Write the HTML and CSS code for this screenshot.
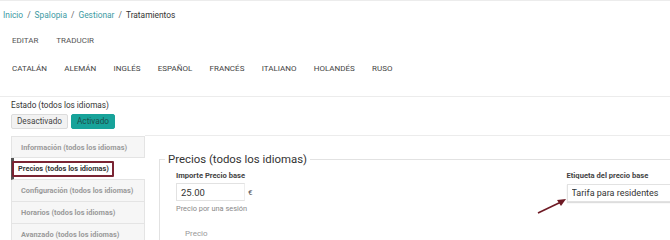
FILE: index.html
```html
<!DOCTYPE html>
<html lang="es">
<head>
    <meta charset="UTF-8">
    <title>Tratamientos</title>
    <link rel="stylesheet" href="styles.css">
</head>
<body>
<div class="page">
    <div class="breadcrumb">
        <a class="crumb">Inicio</a><span class="sep">/</span><a class="crumb">Spalopia</a><span class="sep">/</span><a class="crumb">Gestionar</a><span class="sep">/</span><span class="current">Tratamientos</span>
    </div>
    <div class="actions">
        <span class="action">EDITAR</span>
        <span class="action">TRADUCIR</span>
    </div>
    <div class="langs">
        <span class="lang">CATALÁN</span>
        <span class="lang">ALEMÁN</span>
        <span class="lang">INGLÉS</span>
        <span class="lang">ESPAÑOL</span>
        <span class="lang">FRANCÉS</span>
        <span class="lang">ITALIANO</span>
        <span class="lang">HOLANDÉS</span>
        <span class="lang">RUSO</span>
    </div>
    <div class="estado">
        <div class="estado-label">Estado (todos los idiomas)</div>
        <div class="toggle">
            <span class="btn off">Desactivado</span>
            <span class="btn on">Activado</span>
        </div>
    </div>
    <div class="content">
        <div class="tabs">
            <div class="tab">Información (todos los idiomas)</div>
            <div class="tab active"><span class="mark">Precios (todos los idiomas)</span></div>
            <div class="tab">Configuración (todos los idiomas)</div>
            <div class="tab">Horarios (todos los idiomas)</div>
            <div class="tab">Avanzado (todos los idiomas)</div>
        </div>
        <div class="pane">
            <fieldset class="group">
                <legend>Precios (todos los idiomas)</legend>
                <div class="fields">
                    <div class="field">
                        <label>Importe Precio base</label>
                        <div class="row">
                            <input class="input short" type="text" value="25.00">
                            <span class="unit">€</span>
                        </div>
                        <div class="help">Precio por una sesión</div>
                    </div>
                    <div class="field right">
                        <label>Etiqueta del precio base</label>
                        <input class="input long" type="text" value="Tarifa para residentes">
                        <svg class="arrow" width="30" height="16" viewBox="0 0 30 16">
                            <line x1="1" y1="15" x2="24" y2="4" stroke="#6e1a24" stroke-width="1.6"/>
                            <polygon points="29,1 20,2 24,8" fill="#6e1a24"/>
                        </svg>
                    </div>
                </div>
                <div class="more">Precio</div>
            </fieldset>
        </div>
    </div>
</div>
</body>
</html>
```

FILE: styles.css
```css
body {
    margin: 0;
    background: #fff;
    font-family: Roboto, "Liberation Sans", sans-serif;
    color: #333;
}
.page {
    border-top: 1px solid #ececec;
    width: 670px;
    height: 239px;
    overflow: hidden;
}
.breadcrumb {
    padding: 8px 0 0 3px;
    font-size: 8.4px;
    line-height: 12px;
}
.crumb {
    color: #3d9aa3;
}
.sep {
    color: #666;
    margin: 0 4px;
}
.current {
    color: #333;
}
.actions {
    padding: 14px 0 0 12px;
    font-size: 8px;
    line-height: 12px;
    color: #555;
}
.action {
    margin-right: 16px;
}
.langs {
    padding: 16px 0 0 12px;
    font-size: 8px;
    line-height: 12px;
    color: #444;
    height: 33px;
    border-bottom: 1px solid #ececec;
}
.lang {
    margin-right: 15.3px;
}
.estado {
    padding: 3px 0 0 11px;
}
.estado-label {
    font-size: 8.2px;
    line-height: 10px;
    color: #333;
}
.toggle {
    display: flex;
    gap: 3px;
    margin-top: 4px;
}
.btn {
    font-size: 8.2px;
    line-height: 13px;
    padding: 0 5px;
    border-radius: 2px;
    border: 1px solid #dcdcdc;
}
.off {
    background: #f2f2f2;
    color: #444;
}
.on {
    background: #17a39a;
    border-color: #17a39a;
    color: #1d4e4a;
    padding: 0 5px;
}
.content {
    display: flex;
    margin-top: 6px;
}
.tabs {
    width: 134px;
    margin-left: 11px;
    margin-top: 1px;
    flex-shrink: 0;
}
.tab {
    height: 22px;
    line-height: 22px;
    padding-left: 9px;
    font-size: 7.4px;
    font-weight: bold;
    color: #9a9a9a;
    background: #f6f6f6;
    border: 1px solid #e4e4e4;
    border-top: none;
    box-sizing: border-box;
}
.tab:first-child {
    border-top: 1px solid #e4e4e4;
}
.tab.active {
    background: #fff;
    color: #333;
    padding-left: 0;
    border-left: 3px solid #555;
    border-right: none;
    display: flex;
    align-items: center;
}
.mark {
    display: inline-block;
    line-height: 12px;
    padding: 0 3px 0 4px;
    border: 2px solid #7a2433;
    border-radius: 1px;
    margin-left: -2px;
}
.pane {
    flex: 1;
    border-top: 1px solid #ececec;
    padding: 16px 0 0 14px;
}
.group {
    margin: 0;
    padding: 5px 0 0 0;
    border: none;
    border-left: 1px solid #e2e2e2;
    border-top: 1px solid #e2e2e2;
    min-width: 0;
    height: 100px;
}
.group legend {
    font-size: 11.4px;
    color: #333;
    padding: 0 3px;
    margin-left: 5px;
}
.fields {
    display: flex;
    padding-left: 16px;
}
.field label {
    display: block;
    font-size: 7.6px;
    font-weight: bold;
    color: #444;
    line-height: 10px;
}
.row {
    display: flex;
    align-items: center;
    gap: 3px;
}
.input {
    font-family: Roboto, "Liberation Sans", sans-serif;
    font-size: 9.5px;
    color: #333;
    border: 1px solid #e2e2e2;
    border-right: none;
    height: 18px;
    box-sizing: border-box;
    padding: 0 4px;
    margin-top: 2px;
    outline: none;
}
.short {
    width: 69px;
    border-right: 1px solid #eee;
}
.unit {
    font-size: 8px;
    color: #555;
    margin-top: 2px;
}
.help {
    font-size: 7.4px;
    color: #888;
    margin-top: 3px;
}
.right {
    margin-left: 314px;
    position: relative;
}
.long {
    width: 110px;
    font-size: 9px;
    box-shadow: 0 1px 1px #ddd;
}
.arrow {
    position: absolute;
    left: -30px;
    top: 27px;
}
.more {
    margin: 16px 0 0 25px;
    font-size: 8px;
    color: #999;
}
```
